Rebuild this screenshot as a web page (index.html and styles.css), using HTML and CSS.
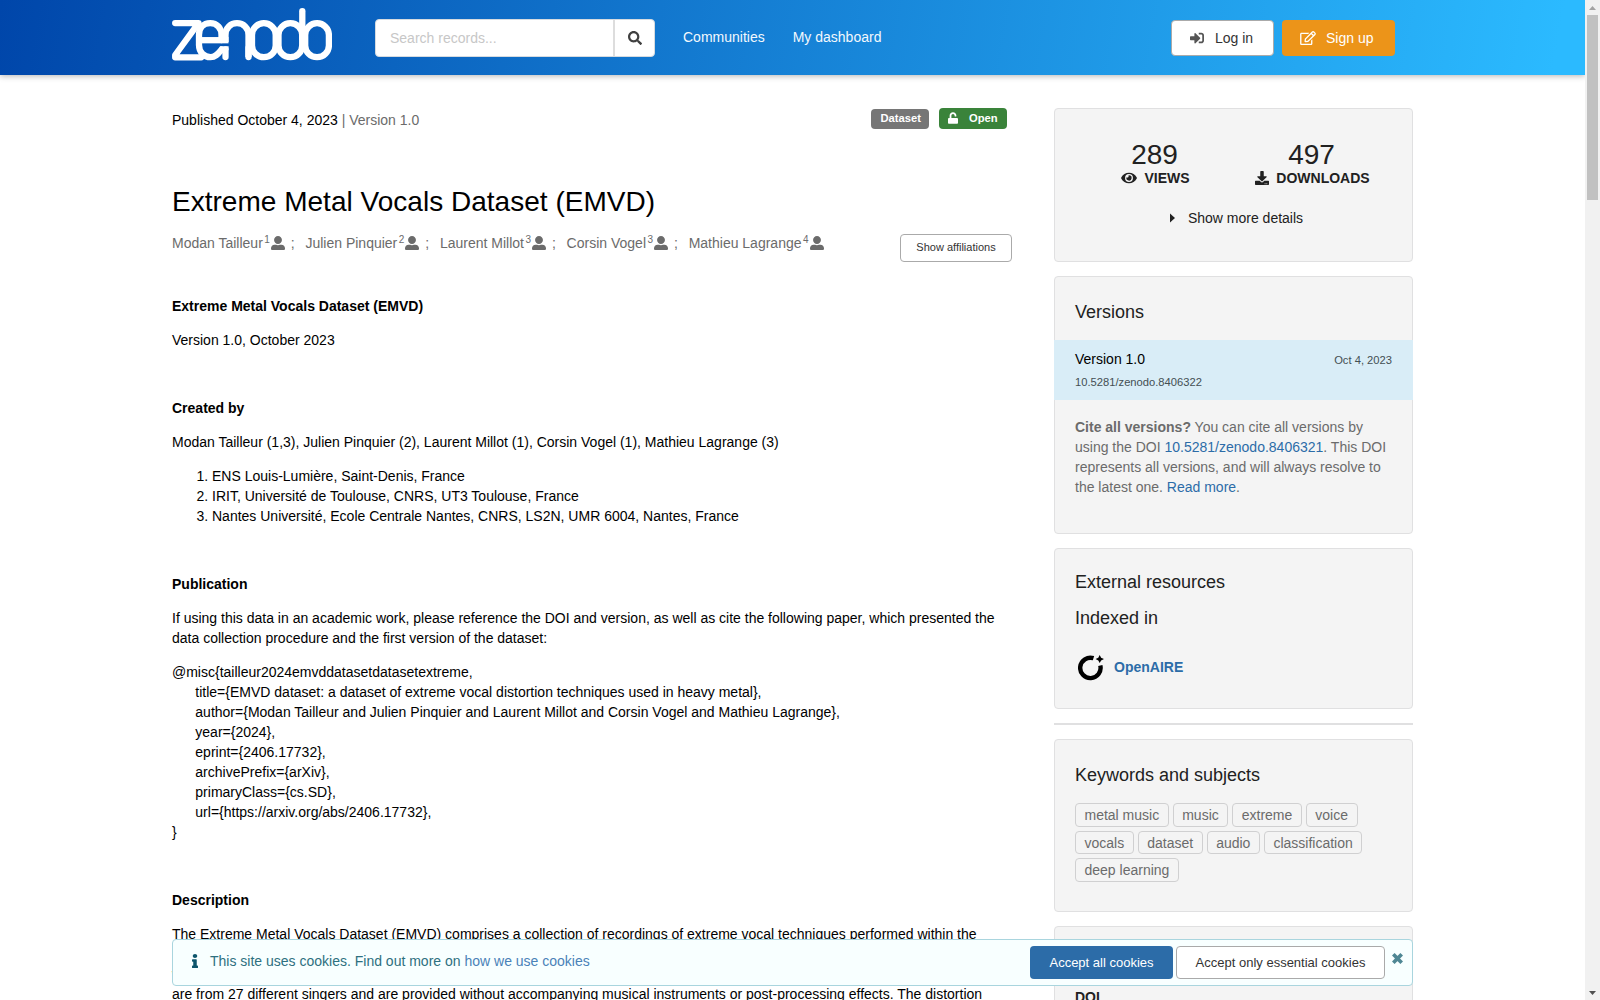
FILE: index.html
```
<!DOCTYPE html>
<html lang="en">
<head>
  <meta charset="UTF-8" />
  <meta name="viewport" content="width=device-width, initial-scale=1.0"/>
  <title>Extreme Metal Vocals Dataset (EMVD)</title>
  <link rel="stylesheet" href="styles.css">
</head>
<body>
  <svg class="sprite" aria-hidden="true">
    <symbol id="user" viewBox="0 0 512 512"><path d="M256 288c79.5 0 144-64.5 144-144S335.5 0 256 0 112 64.5 112 144s64.5 144 144 144zm128 32h-55.1c-22.2 10.2-46.9 16-72.9 16s-50.6-5.8-72.9-16H128C57.3 320 0 377.3 0 448v16c0 26.5 21.5 48 48 48h416c26.5 0 48-21.5 48-48v-16c0-70.7-57.3-128-128-128z"/></symbol>
  </svg>
  <div class="page">
    <header class="header">
      <div class="container nav">
        <a class="logo" href="#" aria-label="zenodo">
          <svg width="160" height="53" viewBox="0 0 160 53" fill="none" stroke="#fff" stroke-width="6.300" stroke-linecap="round" stroke-linejoin="round">
            <path d="M3.200 15.100h23.300L3.200 47v2.300h26"/>
            <path d="M27 32.200h29.500" stroke-linecap="butt"/>
            <path d="M49.500 32V27c0-7-4.500-11.800-11.300-11.800S27 20 27 27v10c0 7 5 12.200 11.500 12.200 5.500 0 8-4 11-7.500"/>
            <path d="M53.500 34V27c0-7 5-11.800 11.500-11.800s11.500 4.800 11.500 11.800v22" stroke-linecap="butt"/>
            <path d="M53.500 49V41.300M76.500 40v9"/>
            <path d="M48 38.300h8.600v4H46z" fill="#fff" stroke="none"/>
            <rect x="80" y="15.200" width="23.700" height="34" rx="11.800"/>
            <rect x="106.500" y="15.200" width="23.700" height="34" rx="11.800"/>
            <path d="M130.300 3.200v27"/>
            <rect x="133.200" y="15.200" width="23.700" height="34" rx="11.800"/>
          </svg>
        </a>
        <form class="search">
          <input type="text" placeholder="Search records...">
          <button type="button" aria-label="Search"><svg width="14" height="14" viewBox="0 0 512 512"><path d="M505 442.7L405.3 343c-4.500-4.500-10.600-7-17-7H372c27.600-35.300 44-79.700 44-128C416 93.100 322.900 0 208 0S0 93.100 0 208s93.100 208 208 208c48.300 0 92.700-16.400 128-44v16.300c0 6.400 2.500 12.500 7 17l99.700 99.700c9.400 9.400 24.600 9.400 33.900 0l28.300-28.300c9.400-9.400 9.400-24.600.1-34zM208 336c-70.700 0-128-57.200-128-128 0-70.700 57.200-128 128-128 70.700 0 128 57.200 128 128 0 70.700-57.200 128-128 128z"/></svg></button>
        </form>
        <nav class="menu"><a href="#">Communities</a><a href="#">My dashboard</a></nav>
        <div class="account">
          <a class="btn login" href="#"><svg width="14" height="14" viewBox="0 0 512 512"><path d="M416 448h-84c-6.600 0-12-5.400-12-12v-40c0-6.600 5.400-12 12-12h84c17.700 0 32-14.300 32-32V160c0-17.700-14.300-32-32-32h-84c-6.600 0-12-5.400-12-12V76c0-6.600 5.400-12 12-12h84c53 0 96 43 96 96v192c0 53-43 96-96 96zm-47-201L201 79c-15-15-41-4.500-41 17v96H24c-13.300 0-24 10.700-24 24v96c0 13.300 10.700 24 24 24h136v96c0 21.500 26 32 41 17l168-168c9.300-9.400 9.300-24.600 0-34z"/></svg>Log in</a>
          <a class="btn signup" href="#"><svg width="16" height="14" viewBox="0 0 576 512"><path d="M402.300 344.900l32-32c5-5 13.700-1.500 13.700 5.700V464c0 26.500-21.500 48-48 48H48c-26.500 0-48-21.500-48-48V112c0-26.500 21.500-48 48-48h273.500c7.100 0 10.700 8.600 5.700 13.700l-32 32c-1.500 1.500-3.500 2.300-5.700 2.300H48v352h352V350.500c0-2.100.8-4.100 2.300-5.600zm156.600-201.800L296.300 405.700l-90.400 10c-26.200 2.900-48.500-19.200-45.600-45.600l10-90.400L432.900 17.100c22.900-22.900 59.900-22.900 82.700 0l43.200 43.200c22.900 22.900 22.900 60 .1 82.800zM460.100 174L402 115.900 216.200 301.800l-7.300 65.300 65.300-7.300L460.100 174zm64.800-79.700l-43.200-43.200c-4.100-4.100-10.800-4.100-14.800 0L436 82l58.100 58.100 30.900-30.900c4-4.200 4-10.800-.1-14.900z"/></svg>Sign up</a>
        </div>
      </div>
    </header>

    <div class="container columns">
      <main class="record">
        <div class="record-top">
          <div>Published October 4, 2023 <span class="muted">| Version 1.0</span></div>
          <div class="labels">
            <span class="label">Dataset</span>
            <span class="label open"><svg width="10" height="12" viewBox="0 0 448 512"><path d="M400 256H152V152.900c0-39.600 31.700-72.500 71.300-72.900 40-.4 72.700 32.100 72.700 72v16c0 13.300 10.700 24 24 24h32c13.300 0 24-10.700 24-24v-16C376 68 307.500-.3 223.500 0 139.500.3 72 69.500 72 153.500V256H48c-26.500 0-48 21.500-48 48v160c0 26.500 21.500 48 48 48h352c26.500 0 48-21.500 48-48V304c0-26.500-21.500-48-48-48z"/></svg>Open</span>
          </div>
        </div>
        <h1>Extreme Metal Vocals Dataset (EMVD)</h1>
        <div class="creators">
          <ul>
            <li>Modan Tailleur<sup>1</sup><svg width="14" height="14"><use href="#user"/></svg><i>;</i></li>
            <li>Julien Pinquier<sup>2</sup><svg width="14" height="14"><use href="#user"/></svg><i>;</i></li>
            <li>Laurent Millot<sup>3</sup><svg width="14" height="14"><use href="#user"/></svg><i>;</i></li>
            <li>Corsin Vogel<sup>3</sup><svg width="14" height="14"><use href="#user"/></svg><i>;</i></li>
            <li>Mathieu Lagrange<sup>4</sup><svg width="14" height="14"><use href="#user"/></svg></li>
          </ul>
          <button class="affiliations">Show affiliations</button>
        </div>
        <div class="description">
          <p><strong>Extreme Metal Vocals Dataset (EMVD)</strong></p>
          <p>Version 1.0, October 2023</p>
          <p>&nbsp;</p>
          <p><strong>Created by</strong></p>
          <p>Modan Tailleur (1,3), Julien Pinquier (2), Laurent Millot (1), Corsin Vogel (1), Mathieu Lagrange (3)</p>
          <ol>
            <li>ENS Louis-Lumière, Saint-Denis, France</li>
            <li>IRIT, Université de Toulouse, CNRS, UT3 Toulouse, France</li>
            <li>Nantes Université, Ecole Centrale Nantes, CNRS, LS2N, UMR 6004, Nantes, France</li>
          </ol>
          <p>&nbsp;</p>
          <p><strong>Publication</strong></p>
          <p>If using this data in an academic work, please reference the DOI and version, as well as cite the following paper, which presented the data collection procedure and the first version of the dataset:</p>
          <p>@misc{tailleur2024emvddatasetdatasetextreme,<br>
            &nbsp; &nbsp; &nbsp; title={EMVD dataset: a dataset of extreme vocal distortion techniques used in heavy metal},<br>
            &nbsp; &nbsp; &nbsp; author={Modan Tailleur and Julien Pinquier and Laurent Millot and Corsin Vogel and Mathieu Lagrange},<br>
            &nbsp; &nbsp; &nbsp; year={2024},<br>
            &nbsp; &nbsp; &nbsp; eprint={2406.17732},<br>
            &nbsp; &nbsp; &nbsp; archivePrefix={arXiv},<br>
            &nbsp; &nbsp; &nbsp; primaryClass={cs.SD},<br>
            &nbsp; &nbsp; &nbsp; url={https://arxiv.org/abs/2406.17732},<br>
            }</p>
          <p>&nbsp;</p>
          <p><strong>Description</strong></p>
          <p>The Extreme Metal Vocals Dataset (EMVD) comprises a collection of recordings of extreme vocal techniques performed within the<br>
            realm of heavy metal music. The dataset consists of audio excerpts of 1 second to 30 seconds long,<br>
            with both distorted voices and clear voice recordings. These vocal recordings<br>
            are from 27 different singers and are provided without accompanying musical instruments or post-processing effects. The distortion</p>
        </div>
      </main>

      <aside class="sidebar">
        <section class="card stats">
          <div class="stats-grid">
            <div class="stat">
              <div class="value">289</div>
              <div class="name"><svg width="16" height="14" viewBox="0 0 576 512"><path d="M572.520 241.400C518.290 135.590 410.930 64 288 64S57.680 135.640 3.480 241.410a32.350 32.350 0 0 0 0 29.190C57.710 376.410 165.070 448 288 448s230.320-71.640 284.520-177.410a32.350 32.350 0 0 0 0-29.190zM288 400a144 144 0 1 1 144-144 143.930 143.930 0 0 1-144 144zm0-240a95.310 95.310 0 0 0-25.310 3.790 47.850 47.850 0 0 1-66.900 66.900A95.780 95.780 0 1 0 288 160z"/></svg>VIEWS</div>
            </div>
            <div class="stat">
              <div class="value">497</div>
              <div class="name"><svg width="14" height="14" viewBox="0 0 512 512"><path d="M216 0h80c13.300 0 24 10.700 24 24v168h87.700c17.800 0 26.700 21.500 14.100 34.100L269.700 378.300c-7.500 7.500-19.800 7.500-27.300 0L90.100 226.100c-12.600-12.600-3.700-34.100 14.100-34.100H192V24c0-13.300 10.700-24 24-24zm296 376v112c0 13.300-10.700 24-24 24H24c-13.300 0-24-10.700-24-24V376c0-13.300 10.700-24 24-24h146.700l49 49c20.100 20.100 52.500 20.100 72.600 0l49-49H488c13.300 0 24 10.700 24 24zm-124 88c0-11-9-20-20-20s-20 9-20 20 9 20 20 20 20-9 20-20zm64 0c0-11-9-20-20-20s-20 9-20 20 9 20 20 20 20-9 20-20z"/></svg>DOWNLOADS</div>
            </div>
          </div>
          <div class="more"><svg width="5" height="10" viewBox="0 0 5 10"><path d="M0 .5 5 5 0 9.500z"/></svg>Show more details</div>
        </section>

        <section class="card versions">
          <h2>Versions</h2>
          <div class="version">
            <div class="version-row"><span>Version 1.0</span><small>Oct 4, 2023</small></div>
            <small>10.5281/zenodo.8406322</small>
          </div>
          <p class="cite"><strong>Cite all versions?</strong> You can cite all versions by using the DOI <a href="#">10.5281/zenodo.8406321</a>. This DOI represents all versions, and will always resolve to the latest one. <a href="#">Read more</a>.</p>
        </section>

        <section class="card external">
          <h2>External resources</h2>
          <h2>Indexed in</h2>
          <div class="openaire">
            <svg width="26" height="26" viewBox="0 0 26 26"><path d="M15.500 3.200A10.200 10.200 0 1 0 22.300 10.500" fill="none" stroke="#000" stroke-width="4.400"/><path d="M21.700 0l1.400 2.700L26 4l-2.900 1.400L21.700 8l-1.400-2.600L17.600 4l2.700-1.300z"/></svg>
            <a href="#">OpenAIRE</a>
          </div>
        </section>

        <hr class="divider">

        <section class="card keywords">
          <h2>Keywords and subjects</h2>
          <div class="tags">
            <span>metal music</span><span>music</span><span>extreme</span><span>voice</span><span>vocals</span><span>dataset</span><span>audio</span><span>classification</span><span>deep learning</span>
          </div>
        </section>

        <section class="card details">
          <h2>Details</h2>
          <strong>DOI</strong>
        </section>
      </aside>
    </div>
  </div>

  <div class="cookie">
    <svg class="info" width="6" height="14" viewBox="0 0 192 512" preserveAspectRatio="none"><path d="M20 424.229h20V279.771H20c-11.046 0-20-8.954-20-20V212c0-11.046 8.954-20 20-20h112c11.046 0 20 8.954 20 20v212.229h20c11.046 0 20 8.954 20 20V492c0 11.046-8.954 20-20 20H20c-11.046 0-20-8.954-20-20v-47.771c0-11.046 8.954-20 20-20zM96 0C56.235 0 24 32.235 24 72s32.235 72 72 72 72-32.235 72-72S135.764 0 96 0z"/></svg>
    <div class="cookie-text">This site uses cookies. Find out more on <a href="#">how we use cookies</a></div>
    <button class="accept">Accept all cookies</button>
    <button class="essential">Accept only essential cookies</button>
    <svg class="close" width="11" height="11" viewBox="0 0 11 11"><path d="M1.300 1.300l8.400 8.400M9.700 1.300L1.300 9.700" fill="none" stroke="#4f8794" stroke-width="3.700"/></svg>
  </div>

  <div class="scrollbar">
    <svg width="15" height="15" viewBox="0 0 15 15"><path d="M4 10h7L7.500 6z" fill="#a3a3a3"/></svg>
    <div class="thumb"></div>
    <svg width="15" height="15" viewBox="0 0 15 15"><path d="M4 6h7L7.500 10z" fill="#505050"/></svg>
  </div>
</body>
</html>
```
FILE: styles.css
```
* { box-sizing: border-box; }
body {
  margin: 0;
  height: 1000px;
  overflow: hidden;
  font-family: "Liberation Sans", Arial, sans-serif;
  font-size: 14px;
  line-height: 20px;
  color: #000;
  background: #fff;
}
a { color: #2c6ca8; text-decoration: none; }
button, input { font-family: inherit; }
svg { flex: none; }
.sprite { display: none; }
.page { width: 1585px; height: 1000px; overflow: hidden; }
.container { width: 1241px; margin: 0 auto; }

.header { height: 75px; background: linear-gradient(100deg, #0046aa 0%, #2bbaff 98%); box-shadow: 0 1px 6px rgba(0, 0, 0, 0.3); }
.nav { display: flex; height: 75px; padding-right: 18px; }
.logo { padding-top: 8px; }
.search { display: flex; width: 280px; height: 38px; margin: 19px 0 0 43px; background: #fff; border: 1px solid #d6dbe0; border-radius: 4px; }
.search input { width: 239px; padding: 0 14px; border: 0; border-right: 2px solid #ddd; border-radius: 4px 0 0 4px; font-size: 14px; background: none; }
.search input::placeholder { color: #c7c7c7; }
.search button { flex: 1; display: flex; align-items: center; justify-content: center; padding: 0; border: 0; background: none; fill: #404040; }
.menu { display: flex; gap: 28px; margin: 27px 0 0 28px; }
.menu a { color: #f2f8fd; }
.account { display: flex; gap: 8px; margin: 20px 0 0 auto; }
.btn { display: flex; align-items: center; height: 36px; border-radius: 4px; }
.login { width: 103px; padding-left: 18px; gap: 11px; color: #333; fill: #555; background: #fff; border: 1px solid #aaa; }
.signup { width: 113px; padding-left: 18px; gap: 10px; color: #fff; fill: #fff; background: #ec9419; }

.columns { display: flex; justify-content: space-between; padding-top: 33px; }
.record { width: 840px; }
.record-top { display: flex; justify-content: space-between; padding: 2px 5px 0 0; }
.muted { color: #6b6b6b; }
.labels { display: flex; align-items: center; gap: 10px; height: 21px; margin-top: -2px; }
.label { display: flex; align-items: center; width: 58px; height: 20px; padding: 0 0 1px 9.500px; color: #fff; fill: #fff; background: #767676; border-radius: 4px; font-size: 11.200px; font-weight: bold; }
.open { width: 68px; height: 21px; padding-left: 9px; gap: 11px; background: #3a833a; }
h1 { margin: 54px 0 0; font-size: 28px; font-weight: normal; line-height: 36px; letter-spacing: 0.020px; }
.creators { display: flex; justify-content: space-between; height: 28px; margin-top: 14px; color: #6b6b6b; }
.creators ul { display: flex; gap: 10.700px; margin: -1px 0 0; padding: 0; list-style: none; }
.creators li { display: flex; align-items: center; height: 20px; fill: #6b6b6b; }
.creators sup { margin: -6px 1px 0 1.500px; font-size: 10px; line-height: 12px; }
.creators i { margin-left: 6px; font-style: normal; }
.affiliations { width: 112px; height: 28px; padding: 0 0 2px; border: 1px solid #aaa; border-radius: 4px; font-size: 11px; color: #333; background: #fff; }
.description { margin-top: 34px; }
.description p { margin: 0 0 14px; }
.description ol { margin: 0 0 14px; padding-left: 40px; }

.sidebar { width: 359px; color: #212121; fill: #212121; }
.card { margin-bottom: 14px; padding: 0 20px; background: #f4f4f4; border: 1px solid #e0e0e1; border-radius: 4px; }
.card h2 { margin: 0; font-size: 18px; font-weight: normal; line-height: 24px; }
.stats { height: 154px; padding-top: 32px; }
.stats-grid { display: grid; grid-template-columns: 157px 157px; padding-left: 1px; }
.value { font-size: 28px; line-height: 28px; text-align: center; }
.name { display: flex; align-items: center; justify-content: center; gap: 7.500px; height: 18px; padding-left: 1.500px; font-weight: bold; }
.more { display: flex; align-items: center; justify-content: center; gap: 13px; margin-top: 21px; padding-left: 6px; }
.versions { height: 258px; padding-top: 23px; }
.version { height: 60px; margin: 16px -21px 0; padding: 9px 21px 0; background: #d9edf7; }
.version-row { display: flex; justify-content: space-between; margin-bottom: 2px; color: #000; }
.version small { display: block; font-size: 11.200px; line-height: 20px; color: #444f53; }
.version-row small { padding-top: 1px; }
.cite { margin: 17px 0 0; color: #6b6b6b; }
.external { height: 161px; padding-top: 21px; }
.external h2 { margin-bottom: 12px; }
.openaire { display: flex; align-items: center; gap: 10px; margin-top: 24px; padding-left: 3px; font-weight: bold; fill: #000; }
.openaire a { margin-top: -1px; }
.openaire svg { margin: 1px 0 0; }
.divider { height: 2px; margin: 0 0 14px; border: 0; background: #e0e0e1; }
.keywords { height: 173px; padding-top: 23px; }
.tags { display: flex; flex-wrap: wrap; gap: 4px; margin-top: 16px; }
.tags span { height: 23.600px; padding: 0 8.500px; border: 1px solid #d0d0d1; border-radius: 4px; line-height: 22px; color: #6b6b6b; }
.details { height: 200px; padding-top: 23px; }
.details strong { display: block; margin-top: 13px; }

/* sits over the bottom of the page */
.cookie { position: absolute; left: 172px; top: 939px; display: flex; align-items: center; width: 1241px; height: 47px; padding: 0 9px 0 19px; background: #f8ffff; border: 1px solid #a9d5de; border-radius: 4px; fill: #0e566c; }
.info { margin-top: -3px; }
.cookie-text { margin: -4px auto 0 12px; color: #2e7080; }
.cookie-text a { color: #4a82b8; }
.cookie button { height: 33px; padding: 0; border-radius: 4px; font-size: 13px; }
.accept { width: 143px; margin-right: 3px; border: 0; color: #fff; background: #2c6ca8; }
.essential { width: 209px; border: 1px solid #aaa; color: #333; background: #fff; }
.close { margin: -8px 0 0 7px; }

.scrollbar { position: absolute; top: 0; right: 0; display: flex; flex-direction: column; width: 15px; height: 1000px; background: #f1f1f1; }
.thumb { height: 185px; margin: 0 2px auto; background: #c1c1c1; }
```
